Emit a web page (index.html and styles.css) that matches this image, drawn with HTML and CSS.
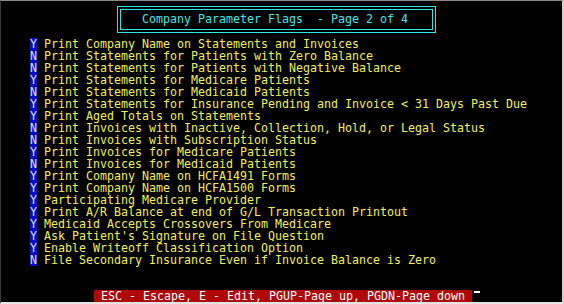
FILE: index.html
```html
<!DOCTYPE html>
<html>
<head>
<meta charset="utf-8">
<link rel="stylesheet" href="styles.css">
</head>
<body>
<div class="screen">
  <div class="title-box">
    <div class="title-inner">Company Parameter Flags  - Page 2 of 4</div>
  </div>
  <ul class="flags">
    <li><span class="flag">Y</span> Print Company Name on Statements and Invoices</li>
    <li><span class="flag">N</span> Print Statements for Patients with Zero Balance</li>
    <li><span class="flag">N</span> Print Statements for Patients with Negative Balance</li>
    <li><span class="flag">Y</span> Print Statements for Medicare Patients</li>
    <li><span class="flag">N</span> Print Statements for Medicaid Patients</li>
    <li><span class="flag">Y</span> Print Statements for Insurance Pending and Invoice &lt; 31 Days Past Due</li>
    <li><span class="flag">Y</span> Print Aged Totals on Statements</li>
    <li><span class="flag">N</span> Print Invoices with Inactive, Collection, Hold, or Legal Status</li>
    <li><span class="flag">N</span> Print Invoices with Subscription Status</li>
    <li><span class="flag">Y</span> Print Invoices for Medicare Patients</li>
    <li><span class="flag">N</span> Print Invoices for Medicaid Patients</li>
    <li><span class="flag">Y</span> Print Company Name on HCFA1491 Forms</li>
    <li><span class="flag">Y</span> Print Company Name on HCFA1500 Forms</li>
    <li><span class="flag">Y</span> Participating Medicare Provider</li>
    <li><span class="flag">Y</span> Print A/R Balance at end of G/L Transaction Printout</li>
    <li><span class="flag">Y</span> Medicaid Accepts Crossovers From Medicare</li>
    <li><span class="flag">Y</span> Ask Patient's Signature on File Question</li>
    <li><span class="flag">Y</span> Enable Writeoff Classification Option</li>
    <li><span class="flag">N</span> File Secondary Insurance Even if Invoice Balance is Zero</li>
  </ul>
  <div class="footer"><span class="keys"> ESC - Escape, E - Edit, PGUP-Page up, PGDN-Page down </span><span class="cursor"></span></div>
</div>
</body>
</html>
```
FILE: styles.css
```css
html, body {
  margin: 0;
  padding: 0;
  background: #000;
}

.screen {
  width: 564px;
  height: 304px;
  box-sizing: border-box;
  background: #000;
  border-top: 1px solid #8a8a8a;
  border-left: 1px solid #3a3a3a;
  border-right: 2px solid #d4d0c8;
  border-bottom: 2px solid #e4e4e4;
  font-family: "DejaVu Sans Mono", "Liberation Mono", monospace;
  font-size: 11.63px;
  line-height: 12px;
  overflow: hidden;
}

.title-box {
  margin: 5px 0 0 116px;
  width: 319px;
  height: 27px;
  box-sizing: border-box;
  border: 1px solid #2ee6e6;
  padding: 2px;
}

.title-inner {
  height: 100%;
  box-sizing: border-box;
  border: 1px solid #2ee6e6;
  padding-left: 21px;
  line-height: 19px;
  color: #3ce8e8;
  white-space: pre;
}

.flags {
  list-style: none;
  margin: 5px 0 0 29px;
  padding: 0;
  color: #f4f050;
}

.flags li {
  height: 12px;
  white-space: pre;
}

.flag {
  display: inline-block;
  width: 7px;
  height: 12px;
  background: #0c0cc4;
  color: #dce0ff;
  text-align: center;
  vertical-align: top;
}

.footer {
  margin: 24px 0 0 93px;
  display: flex;
  align-items: flex-start;
  height: 12px;
}

.keys {
  background: #b00808;
  color: #fff;
  height: 12px;
  white-space: pre;
}

.cursor {
  width: 6px;
  height: 2px;
  margin: 1px 0 0 2px;
  background: #fff;
}
```
